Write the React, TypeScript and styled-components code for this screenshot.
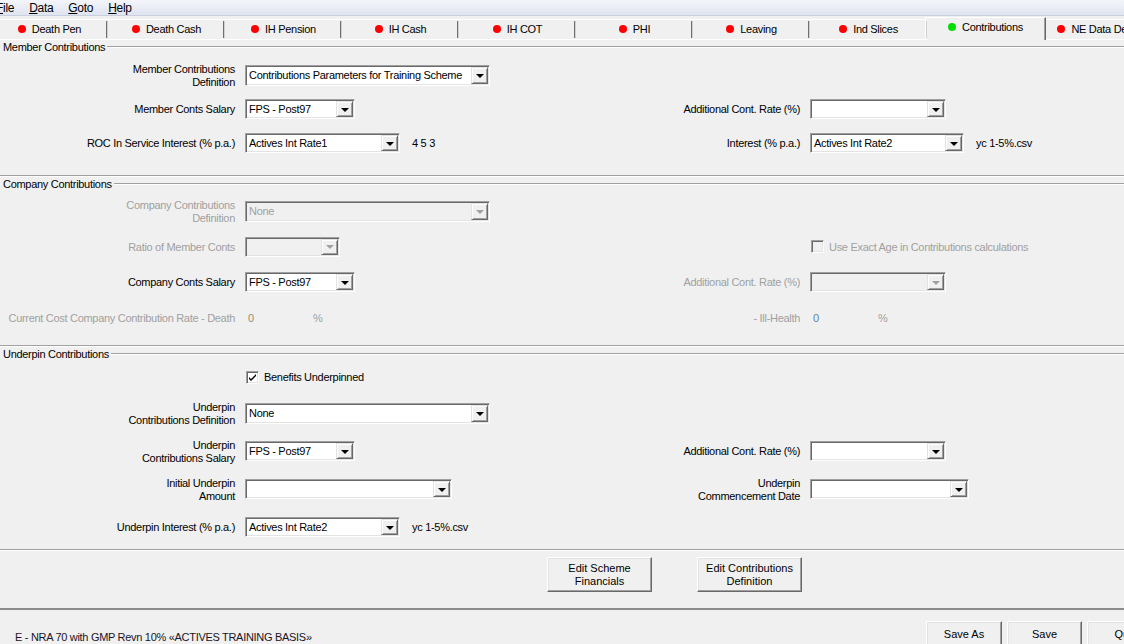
import React from 'react';
import styled, { createGlobalStyle, css } from 'styled-components';

const Global = createGlobalStyle`
  html, body { margin: 0; padding: 0; background: #f0f0f0; }
  body {
    font-family: "Liberation Sans", Arial, sans-serif;
    font-size: 11px;
    letter-spacing: -0.3px;
    color: #000;
    overflow: hidden;
  }
`;

const Window = styled.div`
  width: 1124px;
  height: 644px;
  overflow: hidden;
  display: flex;
  flex-direction: column;
  background: #f0f0f0;
`;

const MenuBar = styled.div`
  flex: none;
  height: 15px;
  display: flex;
  align-items: center;
  gap: 15px;
  padding-left: 0;
  margin-left: -4px;
  background: linear-gradient(#f4f5fa, #dfe4f0);
  border-bottom: 1px solid #c8cfdf;
  font-size: 12px;
`;

const MenuItem = styled.span`
  line-height: 14px;
  u { text-decoration: underline; text-underline-offset: 1px; }
`;

const TabStrip = styled.div`
  flex: none;
  display: flex;
  align-items: flex-end;
  height: 23px;
  margin: 1px 0 0 -9px;
`;

const Tab = styled.div<{ $active?: boolean }>`
  position: relative;
  flex: none;
  box-sizing: border-box;
  display: flex;
  align-items: center;
  justify-content: center;
  gap: 6px;
  white-space: nowrap;
  border-top: 1px solid #fff;
  ${(p) =>
    p.$active
      ? css`
          width: 121px;
          height: 23px;
          margin-left: -2px;
          padding-bottom: 4px;
          border-left: 1px solid #fff;
          border-right: 1px solid #696969;
          box-shadow: inset -1px 0 0 #a0a0a0;
        `
      : css`
          width: 117px;
          height: 21px;
          padding-bottom: 2px;
          border-bottom: 1px solid #fff;
          &::after {
            content: '';
            position: absolute;
            right: 0;
            top: 1px;
            bottom: 1px;
            width: 2px;
            background: linear-gradient(90deg, #6f6f6f 50%, #d0d0d0 50%);
          }
        `}
`;

const Dot = styled.span<{ $on?: boolean }>`
  width: 8px;
  height: 8px;
  border-radius: 50%;
  flex: none;
  background: ${(p) => (p.$on ? '#00dd00' : '#ff0000')};
`;

const Group = styled.section`
  flex: none;
  border-bottom: 1px solid #a0a0a0;
  box-shadow: 0 1px 0 #fff;
  margin-bottom: 1px;
`;

const Legend = styled.div`
  display: flex;
  align-items: center;
  gap: 2px;
  height: 12px;
  margin: 1px 0 0 3px;
  white-space: nowrap;
  &::after {
    content: '';
    flex: 1;
    height: 0;
    border-top: 1px solid #a0a0a0;
    border-bottom: 1px solid #fff;
  }
`;

const Rows = styled.div<{ $pt: number; $pb: number }>`
  padding: ${(p) => p.$pt}px 0 ${(p) => p.$pb}px;
`;

const Row = styled.div<{ $h: number }>`
  display: grid;
  grid-template-columns: 235px 330px 215px 1fr;
  column-gap: 10px;
  align-items: center;
  height: ${(p) => p.$h}px;
`;

const Label = styled.div<{ $disabled?: boolean }>`
  display: flex;
  justify-content: flex-end;
  text-align: right;
  white-space: nowrap;
  line-height: 13px;
  padding-top: 1px;
  color: ${(p) => (p.$disabled ? '#a0a0a0' : '#000')};
`;

const Cell = styled.div`
  display: flex;
  align-items: center;
  gap: 12px;
  white-space: nowrap;
`;

const ComboBox = styled.div<{ $w: number; $h?: number; $disabled?: boolean }>`
  box-sizing: border-box;
  flex: none;
  width: ${(p) => p.$w}px;
  height: ${(p) => p.$h ?? 20}px;
  display: flex;
  align-items: stretch;
  padding: 1px;
  background: ${(p) => (p.$disabled ? '#f0f0f0' : '#fff')};
  border-top: 1px solid #a0a0a0;
  border-left: 1px solid #a0a0a0;
  border-right: 1px solid #fff;
  border-bottom: 1px solid #fff;
  box-shadow: inset 1px 1px 0 #696969, inset -1px -1px 0 #e3e3e3;
  color: ${(p) => (p.$disabled ? '#a0a0a0' : '#000')};
`;

const ComboText = styled.span`
  flex: 1;
  display: flex;
  align-items: center;
  padding-left: 2px;
  overflow: hidden;
  white-space: nowrap;
`;

const DropButton = styled.span<{ $disabled?: boolean }>`
  box-sizing: border-box;
  flex: none;
  width: 17px;
  display: flex;
  align-items: center;
  justify-content: center;
  background: #f0f0f0;
  border-top: 1px solid #e3e3e3;
  border-left: 1px solid #e3e3e3;
  border-right: 1px solid #696969;
  border-bottom: 1px solid #696969;
  box-shadow: inset 1px 1px 0 #fff, inset -1px -1px 0 #a0a0a0;
  &::before {
    content: '';
    width: 0;
    height: 0;
    border-left: 4px solid transparent;
    border-right: 4px solid transparent;
    border-top: 4px solid ${(p) => (p.$disabled ? '#a0a0a0' : '#000')};
    margin-top: 1px;
  }
`;

const Note = styled.span`
  color: #000;
`;

const CheckWrap = styled.label<{ $disabled?: boolean }>`
  display: flex;
  align-items: center;
  gap: 5px;
  white-space: nowrap;
  margin-left: 1px;
  color: ${(p) => (p.$disabled ? '#a0a0a0' : '#000')};
`;

const CheckBox = styled.span<{ $disabled?: boolean }>`
  box-sizing: border-box;
  width: 13px;
  height: 13px;
  flex: none;
  display: flex;
  align-items: center;
  justify-content: center;
  background: ${(p) => (p.$disabled ? '#f0f0f0' : '#fff')};
  border-top: 1px solid #a0a0a0;
  border-left: 1px solid #a0a0a0;
  border-right: 1px solid #fff;
  border-bottom: 1px solid #fff;
  box-shadow: inset 1px 1px 0 #696969, inset -1px -1px 0 #e3e3e3;
`;

const ValueCell = styled.div`
  display: flex;
  align-items: center;
  padding-left: 3px;
  white-space: nowrap;
`;

const Value = styled.span<{ $color: string }>`
  width: 65px;
  color: ${(p) => p.$color};
`;

const Pct = styled.span`
  color: #a0a0a0;
`;

const ActionBar = styled.div`
  flex: none;
  height: 59px;
  display: flex;
  align-items: flex-start;
  gap: 45px;
  padding: 6px 0 0 547px;
  box-sizing: border-box;
  border-bottom: 2px solid #8c8c8c;
`;

const Button = styled.button<{ $w: number; $h: number }>`
  box-sizing: border-box;
  width: ${(p) => p.$w}px;
  height: ${(p) => p.$h}px;
  flex: none;
  padding: 0;
  font: inherit;
  line-height: 13px;
  color: #000;
  background: #f0f0f0;
  border-top: 1px solid #fff;
  border-left: 1px solid #fff;
  border-right: 1px solid #696969;
  border-bottom: 1px solid #696969;
  box-shadow: inset -1px -1px 0 #a0a0a0, inset 1px 1px 0 #e3e3e3;
`;

const StatusBar = styled.div`
  flex: 1;
  display: flex;
  align-items: flex-start;
  padding-top: 11px;
  margin-right: -38px;
`;

const StatusText = styled.div`
  flex: 1;
  padding: 10px 0 0 15px;
  white-space: nowrap;
  color: #1a1426;
  font-size: 11px;
`;

const BottomButtons = styled.div`
  display: flex;
  gap: 5px;
`;

function Combo({ w, h, value, disabled }: { w: number; h?: number; value?: string; disabled?: boolean }) {
  return (
    <ComboBox $w={w} $h={h} $disabled={disabled}>
      <ComboText>{value}</ComboText>
      <DropButton $disabled={disabled} />
    </ComboBox>
  );
}

function Check({ checked, disabled, children }: { checked?: boolean; disabled?: boolean; children: React.ReactNode }) {
  return (
    <CheckWrap $disabled={disabled}>
      <CheckBox $disabled={disabled}>
        {checked && (
          <svg width="9" height="9" viewBox="0 0 9 9">
            <path d="M1 4 L3 6 L8 1 L8 3 L3 8 L1 6 Z" fill="#000" />
          </svg>
        )}
      </CheckBox>
      {children}
    </CheckWrap>
  );
}

const tabs = ['Death Pen', 'Death Cash', 'IH Pension', 'IH Cash', 'IH COT', 'PHI', 'Leaving', 'Ind Slices'];

export default function App() {
  return (
    <Window>
      <Global />
      <MenuBar>
        <MenuItem><u>F</u>ile</MenuItem>
        <MenuItem><u>D</u>ata</MenuItem>
        <MenuItem><u>G</u>oto</MenuItem>
        <MenuItem><u>H</u>elp</MenuItem>
      </MenuBar>
      <TabStrip>
        {tabs.map((t) => (
          <Tab key={t}>
            <Dot />
            {t}
          </Tab>
        ))}
        <Tab $active>
          <Dot $on />
          Contributions
        </Tab>
        <Tab>
          <Dot />
          NE Data Defaults
        </Tab>
      </TabStrip>

      <Group>
        <Legend>Member Contributions</Legend>
        <Rows $pt={5} $pb={15}>
          <Row $h={34}>
            <Label>Member Contributions<br />Definition</Label>
            <Cell><Combo w={245} h={21} value="Contributions Parameters for Training Scheme" /></Cell>
          </Row>
          <Row $h={34}>
            <Label>Member Conts Salary</Label>
            <Cell><Combo w={110} value="FPS - Post97" /></Cell>
            <Label>Additional Cont. Rate (%)</Label>
            <Cell><Combo w={136} /></Cell>
          </Row>
          <Row $h={34}>
            <Label>ROC In Service Interest (% p.a.)</Label>
            <Cell>
              <Combo w={155} value="Actives Int Rate1" />
              <Note>4 5 3</Note>
            </Cell>
            <Label>Interest (% p.a.)</Label>
            <Cell>
              <Combo w={154} value="Actives Int Rate2" />
              <Note>yc 1-5%.csv</Note>
            </Cell>
          </Row>
        </Rows>
      </Group>

      <Group>
        <Legend>Company Contributions</Legend>
        <Rows $pt={3} $pb={9}>
          <Row $h={36}>
            <Label $disabled>Company Contributions<br />Definition</Label>
            <Cell><Combo w={245} h={21} value="None" disabled /></Cell>
          </Row>
          <Row $h={35}>
            <Label $disabled>Ratio of Member Conts</Label>
            <Cell><Combo w={95} disabled /></Cell>
            <span />
            <Cell><Check disabled>Use Exact Age in Contributions calculations</Check></Cell>
          </Row>
          <Row $h={36}>
            <Label>Company Conts Salary</Label>
            <Cell><Combo w={110} value="FPS - Post97" /></Cell>
            <Label $disabled>Additional Cont. Rate (%)</Label>
            <Cell><Combo w={136} disabled /></Cell>
          </Row>
          <Row $h={36}>
            <Label $disabled>Current Cost Company Contribution Rate - Death</Label>
            <ValueCell>
              <Value $color="#9a8a6c">0</Value>
              <Pct>%</Pct>
            </ValueCell>
            <Label $disabled>- Ill-Health</Label>
            <ValueCell>
              <Value $color="#5b82b0">0</Value>
              <Pct>%</Pct>
            </ValueCell>
          </Row>
        </Rows>
      </Group>

      <Group>
        <Legend>Underpin Contributions</Legend>
        <Rows $pt={0} $pb={3}>
          <Row $h={34}>
            <span />
            <Cell><Check checked>Benefits Underpinned</Check></Cell>
          </Row>
          <Row $h={38}>
            <Label>Underpin<br />Contributions Definition</Label>
            <Cell><Combo w={245} h={21} value="None" /></Cell>
          </Row>
          <Row $h={38}>
            <Label>Underpin<br />Contributions Salary</Label>
            <Cell><Combo w={110} value="FPS - Post97" /></Cell>
            <Label>Additional Cont. Rate (%)</Label>
            <Cell><Combo w={136} /></Cell>
          </Row>
          <Row $h={38}>
            <Label>Initial Underpin<br />Amount</Label>
            <Cell><Combo w={207} /></Cell>
            <Label>Underpin<br />Commencement Date</Label>
            <Cell><Combo w={159} /></Cell>
          </Row>
          <Row $h={38}>
            <Label>Underpin Interest (% p.a.)</Label>
            <Cell>
              <Combo w={155} value="Actives Int Rate2" />
              <Note>yc 1-5%.csv</Note>
            </Cell>
          </Row>
        </Rows>
      </Group>

      <ActionBar>
        <Button $w={105} $h={35}>Edit Scheme<br />Financials</Button>
        <Button $w={105} $h={35}>Edit Contributions<br />Definition</Button>
      </ActionBar>

      <StatusBar>
        <StatusText>E - NRA 70 with GMP Revn 10% «ACTIVES TRAINING BASIS»</StatusText>
        <BottomButtons>
          <Button $w={76} $h={26}>Save As</Button>
          <Button $w={75} $h={26}>Save</Button>
          <Button $w={75} $h={26}>Quit</Button>
        </BottomButtons>
      </StatusBar>
    </Window>
  );
}
